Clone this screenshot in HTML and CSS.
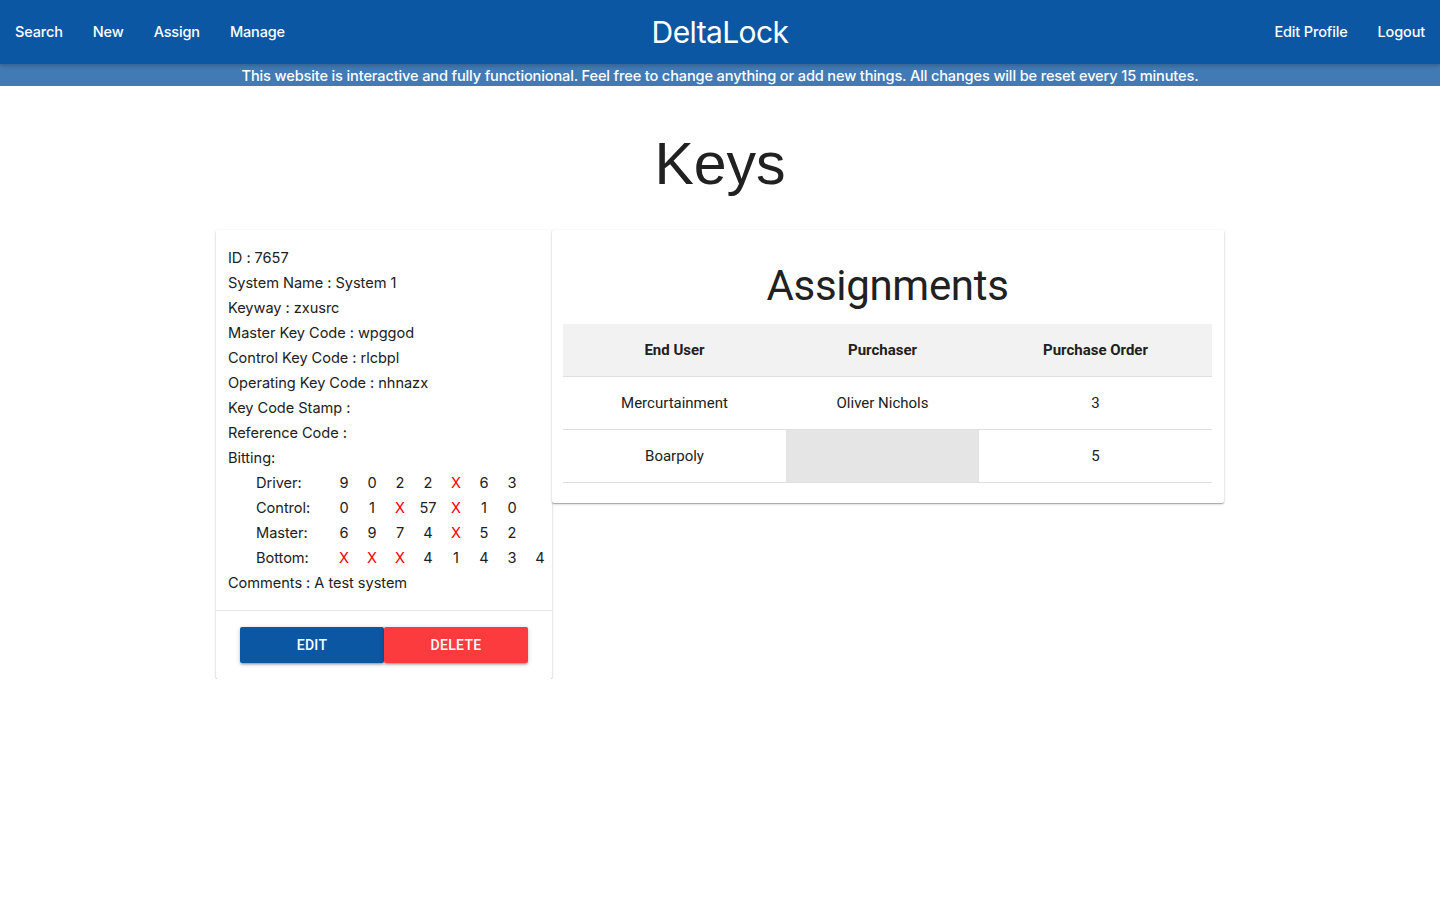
FILE: index.html
```html
<!DOCTYPE html>
<html>
<head>
<meta charset="utf-8">
<title>DeltaLock</title>
<link rel="stylesheet" href="styles.css">
</head>
<body>
<header class="nav">
  <div class="nav-left">
    <a class="nav-link">Search</a>
    <a class="nav-link">New</a>
    <a class="nav-link">Assign</a>
    <a class="nav-link">Manage</a>
  </div>
  <div class="brand">DeltaLock</div>
  <div class="nav-right">
    <a class="nav-link">Edit Profile</a>
    <a class="nav-link">Logout</a>
  </div>
</header>
<div class="banner">This website is interactive and fully functionional. Feel free to change anything or add new things. All changes will be reset every 15 minutes.</div>

<main class="main">
  <h1 class="page-title">Keys</h1>
  <div class="cards">
    <section class="card key-card">
      <div class="key-info">
        <div class="line">ID : 7657</div>
        <div class="line">System Name : System 1</div>
        <div class="line">Keyway : zxusrc</div>
        <div class="line">Master Key Code : wpggod</div>
        <div class="line">Control Key Code : rlcbpl</div>
        <div class="line">Operating Key Code : nhnazx</div>
        <div class="line">Key Code Stamp :</div>
        <div class="line">Reference Code :</div>
        <div class="line">Bitting:</div>
        <div class="bitting">
          <div class="brow"><span class="blabel">Driver:</span><span class="b">9</span><span class="b">0</span><span class="b">2</span><span class="b">2</span><span class="b x">X</span><span class="b">6</span><span class="b">3</span></div>
          <div class="brow"><span class="blabel">Control:</span><span class="b">0</span><span class="b">1</span><span class="b x">X</span><span class="b">57</span><span class="b x">X</span><span class="b">1</span><span class="b">0</span></div>
          <div class="brow"><span class="blabel">Master:</span><span class="b">6</span><span class="b">9</span><span class="b">7</span><span class="b">4</span><span class="b x">X</span><span class="b">5</span><span class="b">2</span></div>
          <div class="brow"><span class="blabel">Bottom:</span><span class="b x">X</span><span class="b x">X</span><span class="b x">X</span><span class="b">4</span><span class="b">1</span><span class="b">4</span><span class="b">3</span><span class="b">4</span></div>
        </div>
        <div class="line">Comments : A test system</div>
      </div>
      <div class="actions">
        <button class="btn btn-edit">Edit</button>
        <button class="btn btn-delete">Delete</button>
      </div>
    </section>
    <section class="card assign-card">
      <h2 class="assign-title">Assignments</h2>
      <table class="table">
        <colgroup>
          <col class="c1"><col class="c2"><col class="c3">
        </colgroup>
        <thead>
          <tr><th>End User</th><th>Purchaser</th><th>Purchase Order</th></tr>
        </thead>
        <tbody>
          <tr><td>Mercurtainment</td><td>Oliver Nichols</td><td>3</td></tr>
          <tr><td>Boarpoly</td><td class="empty"></td><td>5</td></tr>
        </tbody>
      </table>
    </section>
  </div>
</main>
</body>
</html>
```

FILE: styles.css
```css
* { box-sizing: border-box; }
html, body { margin: 0; padding: 0; }
body {
  font-family: "Roboto", "Inter", "Liberation Sans", sans-serif;
  color: #212121;
  background: #fff;
}
.nav {
  height: 64px;
  background: #0c57a3;
  display: flex;
  align-items: center;
  justify-content: space-between;
  position: relative;
  box-shadow: 0 2px 4px rgba(0,0,0,0.2);
  z-index: 2;
}
.nav-left, .nav-right {
  display: flex;
  align-items: center;
}
.nav-link {
  font-family: "Inter", "Roboto", sans-serif;
  font-size: 14.5px;
  font-weight: 500;
  color: #fff;
  padding: 0 15px;
  line-height: 66px;
  letter-spacing: -0.15px;
}
.brand {
  position: absolute;
  left: 50%;
  transform: translateX(-50%);
  font-family: "Inter", "Roboto", sans-serif;
  color: #fff;
  font-size: 30px;
  font-weight: 400;
  letter-spacing: -0.6px;
  line-height: 64px;
}
.banner {
  height: 22px;
  background: #417ab5;
  color: #fff;
  font-family: "Inter", "Roboto", sans-serif;
  font-size: 14.6px;
  font-weight: 500;
  text-align: center;
  line-height: 25px;
  letter-spacing: -0.15px;
}
.main {
  width: 1008px;
  margin: 0 auto;
}
.page-title {
  font-family: "Liberation Sans", Arial, sans-serif;
  font-weight: 400;
  font-size: 59px;
  text-align: center;
  margin: 0;
  padding-top: 42px;
  height: 144px;
  line-height: 72px;
  color: #212121;
}
.cards {
  display: flex;
  align-items: flex-start;
}
.card {
  background: #fff;
  border-radius: 2px;
  box-shadow: 0 1px 3px rgba(0,0,0,0.2), 0 1px 1px rgba(0,0,0,0.14), 0 2px 1px -1px rgba(0,0,0,0.12);
}
.key-card {
  width: 336px;
  flex: none;
}
.key-info {
  padding: 15px 12px 15px;
  font-family: "Inter", "Roboto", sans-serif;
  font-size: 14.6px;
  letter-spacing: -0.05px;
  border-bottom: 1px solid #e5e5e5;
}
.line {
  height: 25px;
  line-height: 26px;
}
.bitting { padding-left: 28px; }
.brow {
  display: flex;
  height: 25px;
  line-height: 26px;
}
.blabel { width: 74px; flex: none; }
.b { width: 28px; flex: none; text-align: center; }
.b.x { color: #ff0000; }
.actions {
  display: flex;
  padding: 16px 24px;
}
.btn {
  width: 144px;
  height: 36px;
  border: none;
  border-radius: 2px;
  color: #fff;
  font-family: "Roboto", sans-serif;
  font-size: 14px;
  font-weight: 500;
  text-transform: uppercase;
  letter-spacing: 0.3px;
  box-shadow: 0 1px 5px rgba(0,0,0,0.2), 0 2px 2px rgba(0,0,0,0.14), 0 3px 1px -2px rgba(0,0,0,0.12);
}
.btn-edit { background: #0c57a3; }
.btn-delete { background: #fc3b3f; }
.assign-card {
  width: 672px;
  flex: none;
  padding: 0 12px 20px 11px;
}
.assign-title {
  margin: 0;
  font-family: "Roboto", "Inter", sans-serif;
  font-weight: 400;
  font-size: 42px;
  text-align: center;
  height: 94px;
  line-height: 52px;
  padding-top: 30px;
  letter-spacing: -0.3px;
}
.table {
  width: 100%;
  border-collapse: collapse;
  font-size: 15px;
}
.c1 { width: 223px; }
.c2 { width: 193px; }
.c3 { width: 233px; }
.table th {
  background: #f2f2f2;
  font-weight: 700;
  height: 52px;
  padding-top: 2px;
  border-bottom: 1px solid #e0e0e0;
  text-align: center;
}
.table td {
  height: 53px;
  padding-top: 2px;
  border-bottom: 1px solid #e0e0e0;
  text-align: center;
}
.table td.empty { background: #e5e5e5; }
```
